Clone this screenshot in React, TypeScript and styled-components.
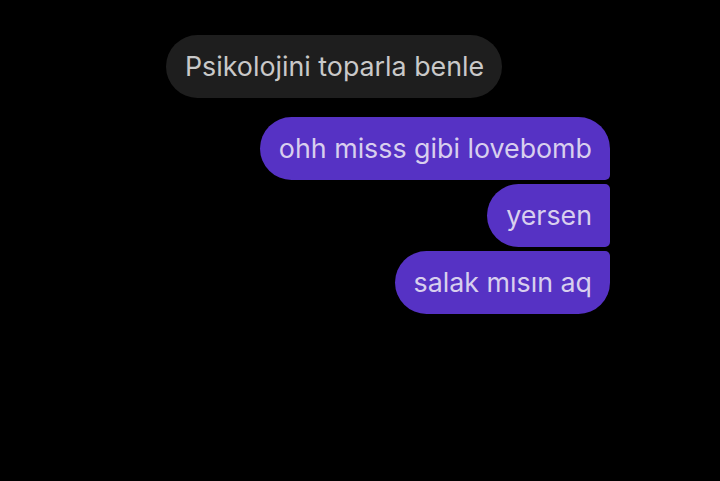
import React from "react";
import styled, {createGlobalStyle, css} from "styled-components";

type Corner = "first" | "middle" | "last";

interface Message {
  id: number;
  text: string;
  position: Corner;
}

const sent: Message[] = [
  {id: 1, text: "ohh misss gibi lovebomb", position: "first"},
  {id: 2, text: "yersen", position: "middle"},
  {id: 3, text: "salak mısın aq", position: "last"},
];

export default function App() {
  return (
    <>
      <GlobalStyle />
      <Thread>
        <Received>Psikolojini toparla benle</Received>
        <SentGroup>
          {sent.map((m) => (
            <Sent key={m.id} $position={m.position}>
              {m.text}
            </Sent>
          ))}
        </SentGroup>
      </Thread>
    </>
  );
}

const GlobalStyle = createGlobalStyle`
  html, body {
    margin: 0;
    background: #000;
  }
  body {
    font-family: Inter, "Noto Sans", sans-serif;
  }
`;

const Thread = styled.div`
  display: flex;
  flex-direction: column;
  width: 610px;
  height: 481px;
  padding: 35px 0 0 166px;
  box-sizing: border-box;
  overflow: hidden;
`;

const Bubble = styled.div`
  height: 63px;
  box-sizing: border-box;
  display: flex;
  align-items: center;
  padding: 0 18px 2px 19px;
  font-size: 26.8px;
  white-space: nowrap;
`;

const Received = styled(Bubble)`
  align-self: flex-start;
  background: #1e1e1e;
  color: #c9c9c9;
  border-radius: 32px;
`;

const SentGroup = styled.div`
  display: flex;
  flex-direction: column;
  align-items: flex-end;
  gap: 4px;
  margin-top: 19px;
`;

const Sent = styled(Bubble)<{$position: Corner}>`
  background: #5632c4;
  color: #d8cfee;
  border-radius: 32px;
  ${({$position}) =>
    $position === "first" &&
    css`
      border-bottom-right-radius: 5px;
    `}
  ${({$position}) =>
    $position === "middle" &&
    css`
      border-top-right-radius: 5px;
      border-bottom-right-radius: 5px;
    `}
  ${({$position}) =>
    $position === "last" &&
    css`
      border-top-right-radius: 5px;
    `}
`;
